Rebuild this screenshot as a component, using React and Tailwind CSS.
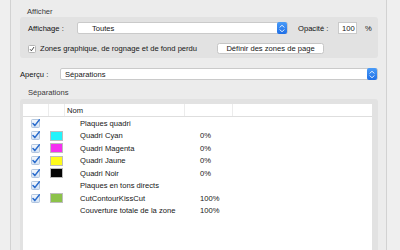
import React from "react";

const Stepper = () => (
  <div className="w-[10px] h-[12px] rounded-[2px] bg-gradient-to-b from-[#4a9cf8] to-[#1f6fe6] flex items-center justify-center shrink-0">
    <svg width="6" height="9" viewBox="0 0 6 9" fill="none">
      <path d="M1 3.2 L3 1.2 L5 3.2" stroke="white" strokeWidth="0.9" strokeLinecap="round" strokeLinejoin="round" />
      <path d="M1 5.8 L3 7.8 L5 5.8" stroke="white" strokeWidth="0.9" strokeLinecap="round" strokeLinejoin="round" />
    </svg>
  </div>
);

const TableCheck = () => (
  <svg width="9" height="9" viewBox="0 0 9 9">
    <defs>
      <linearGradient id="cbg" x1="0" y1="0" x2="0" y2="1">
        <stop offset="0" stopColor="#f6f9fd" />
        <stop offset="1" stopColor="#d3e2f4" />
      </linearGradient>
    </defs>
    <rect x="0.5" y="0.5" width="8" height="8" rx="1" fill="url(#cbg)" stroke="#a3bbd9" strokeWidth="0.8" />
    <path d="M2 4.6 L3.8 6.6 L8.4 0.8" stroke="#2a6ccc" strokeWidth="1.5" fill="none" strokeLinecap="round" strokeLinejoin="round" />
  </svg>
);

const rows = [
  { check: true, name: "Plaques quadri" },
  { check: true, color: "#22f4fb", name: "Quadri Cyan", pct: "0%" },
  { check: true, color: "#f52ff0", name: "Quadri Magenta", pct: "0%" },
  { check: true, color: "#fffb1c", name: "Quadri Jaune", pct: "0%" },
  { check: true, color: "#050505", name: "Quadri Noir", pct: "0%" },
  { check: true, name: "Plaques en tons directs" },
  { check: true, color: "#8cc24a", name: "CutContourKissCut", pct: "100%" },
  { check: false, name: "Couverture totale de la zone", pct: "100%" },
];

export default function App() {
  return (
    <div
      className="w-[400px] h-[250px] overflow-hidden bg-[#efefef] text-[7.6px] text-[#161616]"
      style={{ fontFamily: '"Liberation Sans", Arial, sans-serif' }}
    >
      <div className="ml-[10px] w-[377px] h-[250px] bg-[#ececec] border-x border-[#d2d2d2] flex flex-col">
        {/* Afficher label */}
        <div className="h-[17px] pt-[7px] pl-[16px] leading-[9px] text-[#3a3a3a]">Afficher</div>

        {/* Group box 1 */}
        <div className="ml-[9px] w-[358px] h-[41px] bg-[#e2e2e2] rounded-[3px] pt-[5px] shrink-0">
          <div className="h-[12px] flex items-center pl-[8px]">
            <div className="w-[49px] leading-[9px] text-[#111]">Affichage :</div>
            <div className="w-[211px] h-[12px] bg-white border border-[#cacaca] rounded-[2px] flex items-center justify-between">
              <span className="pl-[14px] leading-[9px]">Toutes</span>
              <Stepper />
            </div>
            <div className="ml-[10px] w-[40px] leading-[9px] text-[#111]">Opacité :</div>
            <div className="w-[19px] h-[12px] bg-white border border-[#cacaca] flex items-center pl-[3px] leading-[9px]">100</div>
            <div className="ml-[8px] leading-[9px]">%</div>
          </div>
          <div className="mt-[9px] h-[11px] flex items-center pl-[8px]">
            <div className="w-[8px] h-[8px] bg-white border border-[#b5b5b5] rounded-[1.5px] flex items-center justify-center">
              <svg width="6" height="6" viewBox="0 0 6 6">
                <path d="M1 3.2 L2.4 4.8 L5 1" stroke="#333" strokeWidth="0.9" fill="none" />
              </svg>
            </div>
            <div className="ml-[4px] w-[177px] leading-[9px] whitespace-nowrap">Zones graphique, de rognage et de fond perdu</div>
            <div className="w-[107px] h-[11px] bg-white border border-[#c6c6c6] rounded-[2.5px] flex items-center justify-center leading-[9px] whitespace-nowrap">
              Définir des zones de page
            </div>
          </div>
        </div>

        {/* Aperçu row */}
        <div className="mt-[10px] h-[12px] flex items-center pl-[9px] shrink-0">
          <div className="w-[40px] leading-[9px] text-[#111]">Aperçu :</div>
          <div className="w-[318px] h-[12px] bg-white border border-[#cacaca] rounded-[2px] flex items-center justify-between">
            <span className="pl-[4px] leading-[9px]">Séparations</span>
            <Stepper />
          </div>
        </div>

        {/* Séparations label */}
        <div className="h-[19px] pt-[8px] pl-[17px] leading-[9px] text-[#3a3a3a] shrink-0">Séparations</div>

        {/* Group box 2 */}
        <div className="ml-[9px] w-[358px] flex-1 bg-[#e2e2e2] rounded-t-[3px] pt-[5px] pl-[3px]">
          <div className="w-[349px] h-full bg-white">
            <div className="h-[13px] grid grid-cols-[26px_16px_120px_48px_1fr] border-b border-[#dedede]">
              <div className="border-r border-[#ececec]" />
              <div className="border-r border-[#ececec]" />
              <div className="border-r border-[#ececec] pl-[2px] flex items-center leading-[9px]">Nom</div>
              <div className="border-r border-[#ececec]" />
              <div />
            </div>
            {rows.map((r, i) => (
              <div key={i} className="h-[12.5px] grid grid-cols-[26px_16px_120px_48px_1fr] items-center">
                <div className="pl-[8px] flex items-center">{r.check ? <TableCheck /> : null}</div>
                <div className="pl-[1px] flex items-center">
                  {r.color ? (
                    <div className="w-[13px] h-[10px] border border-[#bdbdbd]" style={{ backgroundColor: r.color }} />
                  ) : null}
                </div>
                <div className="pl-[15px] leading-[9px] whitespace-nowrap">{r.name}</div>
                <div className="pl-[15px] leading-[9px]">{r.pct || ""}</div>
                <div />
              </div>
            ))}
          </div>
        </div>
      </div>
    </div>
  );
}
